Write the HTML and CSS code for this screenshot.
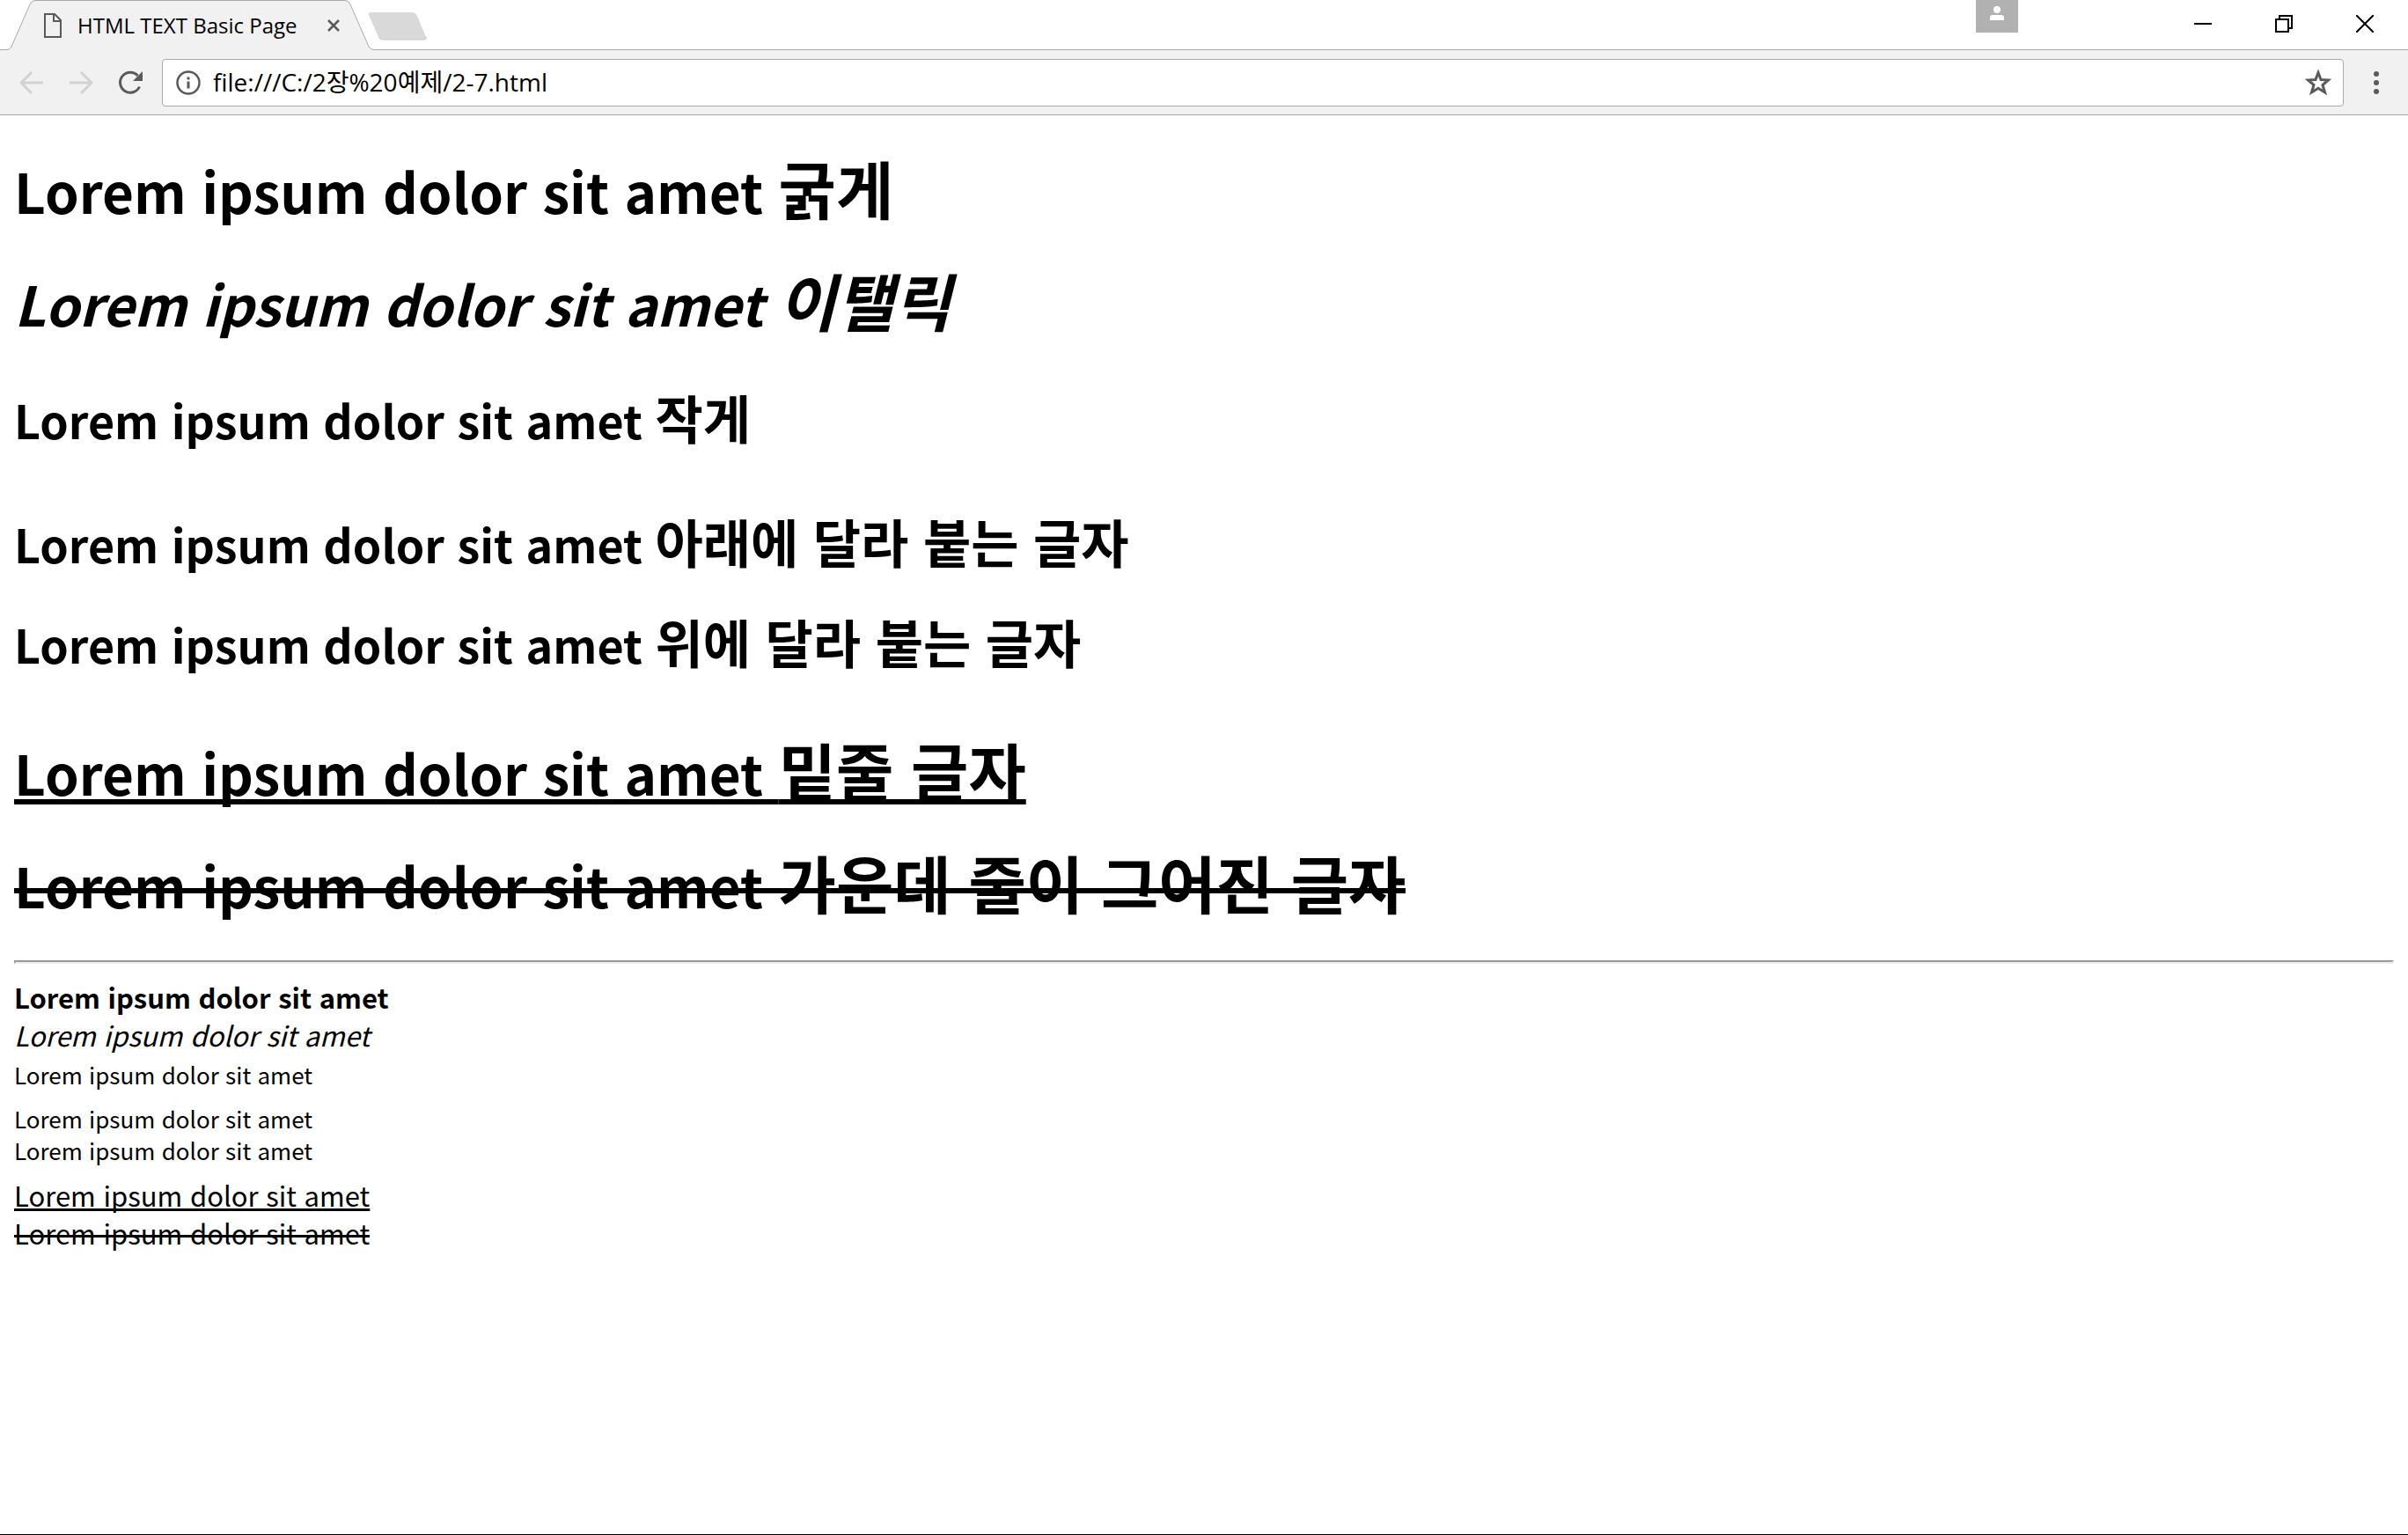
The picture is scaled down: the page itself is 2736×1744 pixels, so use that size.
FILE: index.html
```html
<!DOCTYPE html>
<html lang="ko">
<head>
<meta charset="utf-8">
<title>HTML TEXT Basic Page</title>
<link rel="stylesheet" href="styles.css">
</head>
<body>
<header>
  <div class="tabstrip">
    <div class="tab">
      <svg class="tab-shape" width="426" height="58" viewBox="0 0 426 58" aria-hidden="true"><path d="M0 56.500H8Q11 56.500 13 53L34 5Q36 .5 40 .5H392Q396 .5 398 5L419 53Q421 56.500 425 56.500V58H0Z" fill="#f1f1f1"/><path d="M0 56.500H8Q11 56.500 13 53L34 5Q36 .5 40 .5H392Q396 .5 398 5L419 53Q421 56.500 425 56.500" fill="none" stroke="#a9a9a9"/></svg>
      <svg class="page-icon" width="20" height="28" viewBox="0 0 20 28" aria-hidden="true"><path d="M1 1H12L19 8V27H1ZM11 1V9H19" fill="none" stroke="#5a5a5a" stroke-width="2"/></svg>
      <span class="tab-title">HTML TEXT Basic Page</span>
      <button class="tab-close" aria-label="Close tab"><svg width="14" height="14" viewBox="0 0 14 14"><path d="M1 1L13 13M13 1L1 13" stroke="#5a5a5a" stroke-width="2.500"/></svg></button>
    </div>
    <button class="new-tab" aria-label="New tab"><svg width="68" height="34" viewBox="0 0 68 34"><path d="M3 1H50Q54 1 56 5L66 29Q67 32 63 32H17Q14 32 12 29L1 4Q0 1 3 1Z" fill="#d9d9d9"/><path d="M66 29Q67 32 63 32H17Q14 32 12 29" fill="none" stroke="#c8c8c8"/></svg></button>
    <div class="window-controls">
      <button class="user" aria-label="Profile"><svg width="16" height="16" viewBox="0 0 16 16" fill="#fff"><circle cx="8" cy="4" r="4"/><path d="M0 16V13Q0 10 3 10H13Q16 10 16 13V16Z"/></svg></button>
      <button aria-label="Minimize"><svg width="20" height="20" viewBox="0 0 20 20"><path d="M0 10H20" stroke="#000" stroke-width="2"/></svg></button>
      <button aria-label="Restore"><svg width="20" height="20" viewBox="0 0 20 20" fill="none" stroke="#000" stroke-width="2"><path d="M1 5H15V19H1ZM5 5V1H19V15H15"/></svg></button>
      <button aria-label="Close"><svg width="20" height="20" viewBox="0 0 20 20"><path d="M0 0L20 20M20 0L0 20" stroke="#000" stroke-width="2"/></svg></button>
    </div>
  </div>
  <div class="toolbar">
    <button class="nav" aria-label="Back" disabled><svg width="28" height="28" viewBox="0 0 28 28" fill="none" stroke="#d2d2d2" stroke-width="3"><path d="M27 14H3M14 2L2 14L14 26"/></svg></button>
    <button class="nav" aria-label="Forward" disabled><svg width="28" height="28" viewBox="0 0 28 28" fill="none" stroke="#d2d2d2" stroke-width="3"><path d="M1 14H25M14 2L26 14L14 26"/></svg></button>
    <button class="nav" aria-label="Reload"><svg width="28" height="28" viewBox="0 0 28 28"><path d="M24.500 18.500A11.500 11.500 0 1 1 22.500 6" fill="none" stroke="#5a5a5a" stroke-width="3"/><path d="M28 1V12H17Z" fill="#5a5a5a"/></svg></button>
    <div class="address">
      <svg width="28" height="28" viewBox="0 0 28 28" aria-hidden="true"><circle cx="14" cy="14" r="12.500" fill="none" stroke="#5a5a5a" stroke-width="2.500"/><path d="M12.500 7.500h3v3h-3zM12.500 12.500h3v8h-3z" fill="#5a5a5a"/></svg>
      <input type="text" aria-label="Address" value="file:///C:/2장%20예제/2-7.html">
      <button aria-label="Bookmark"><svg width="30" height="30" viewBox="0 0 30 30"><path d="M15 3.500L18 11.500L26.500 12L20 17.500L22.500 26L15 21.300L7.500 26L10 17.500L3.500 12L12 11.500Z" fill="none" stroke="#5a5a5a" stroke-width="3"/></svg></button>
    </div>
    <button class="menu" aria-label="Menu"><svg width="6" height="26" viewBox="0 0 6 26" fill="#5a5a5a"><circle cx="3" cy="3" r="3"/><circle cx="3" cy="13" r="3"/><circle cx="3" cy="23" r="3"/></svg></button>
  </div>
</header>
<main>
  <h1><b>Lorem ipsum dolor sit amet <span class="ko">굵게</span></b></h1>
  <h1><i>Lorem ipsum dolor sit amet <span class="ko">이탤릭</span></i></h1>
  <h1><small>Lorem ipsum dolor sit amet <span class="ko">작게</span></small></h1>
  <h1><sub>Lorem ipsum dolor sit amet <span class="ko">아래에 달라 붙는 글자</span></sub></h1>
  <h1><sup>Lorem ipsum dolor sit amet <span class="ko">위에 달라 붙는 글자</span></sup></h1>
  <h1><ins>Lorem ipsum dolor sit amet <span class="ko">밑줄 글자</span></ins></h1>
  <h1><del>Lorem ipsum dolor sit amet <span class="ko">가운데 줄이 그어진 글자</span></del></h1>
  <hr>
  <p>
    <b>Lorem ipsum dolor sit amet</b><br>
    <i>Lorem ipsum dolor sit amet</i><br>
    <small>Lorem ipsum dolor sit amet</small><br>
    <sub>Lorem ipsum dolor sit amet</sub><br>
    <sup>Lorem ipsum dolor sit amet</sup><br>
    <ins>Lorem ipsum dolor sit amet</ins><br>
    <del>Lorem ipsum dolor sit amet</del>
  </p>
</main>
</body>
</html>
```
FILE: styles.css
```css
* {
  box-sizing: border-box;
}

body {
  margin: 0;
  min-height: 100vh;
  background: #fff;
  border-bottom: 1px solid #000;
  color: #000;
  font-family: "Noto Sans CJK KR", sans-serif;
  font-size: 31px;
  line-height: 43px;
}

button {
  display: flex;
  align-items: center;
  justify-content: center;
  margin: 0;
  padding: 0;
  border: 0;
  background: none;
}

svg {
  display: block;
  flex: none;
}

/* Browser frame */
header {
  font-family: "Open Sans", "Noto Sans CJK KR", sans-serif;
}

.tabstrip {
  display: flex;
  height: 57px;
  border-bottom: 1px solid #a9a9a9;
}

.tab {
  position: relative;
  display: flex;
  align-items: center;
  width: 418px;
  height: 58px;
  padding: 0 32px 0 50px;
}

.tab-shape {
  position: absolute;
  left: 0;
  top: 0;
}

.page-icon,
.tab-title,
.tab-close {
  position: relative;
}

.tab-title {
  flex: 1;
  margin-left: 18px;
  font-size: 24px;
  line-height: 32px;
}

.new-tab {
  height: 34px;
  margin-top: 13px;
}

.window-controls {
  display: flex;
  margin-left: auto;
  padding-right: 3px;
}

.window-controls button {
  width: 92px;
  height: 54px;
}

.window-controls .user {
  width: 48px;
  height: 37px;
  margin-right: 164px;
  padding-bottom: 7px;
  background: #b1b1b1;
}

.toolbar {
  display: flex;
  align-items: center;
  height: 74px;
  padding-left: 22px;
  background: #f1f1f1;
  border-bottom: 1px solid #a9a9a9;
}

.nav {
  margin-right: 28px;
}

.nav + .nav + .nav {
  margin-right: 22px;
}

.address {
  display: flex;
  flex: 1;
  align-items: center;
  height: 54px;
  padding: 0 13px 0 15px;
  background: #fff;
  border: 1px solid #a9a9a9;
  border-radius: 4px;
}

.address input {
  flex: 1;
  height: 44px;
  margin: 0;
  padding: 0 0 4px 14px;
  border: 0;
  outline: 0;
  background: none;
  color: #000;
  font-family: inherit;
  font-size: 28px;
}

.menu {
  width: 73px;
  height: 54px;
}

/* Page content */
main {
  display: flow-root;
  padding: 0 16px 16px;
}

h1 {
  margin: 43px 0;
  font-size: 62px;
  font-weight: 700;
  line-height: 85px;
}

b {
  font-weight: 700;
}

small,
sub,
sup {
  font-size: 26px;
  line-height: 36px;
}

sub {
  vertical-align: -7px;
}

sup {
  vertical-align: 10px;
}

h1 small,
h1 sub,
h1 sup {
  font-size: 52px;
  line-height: 71px;
}

h1 sub {
  vertical-align: -13px;
}

h1 sup {
  vertical-align: 22px;
}

/* Hangul is set a little larger than the Latin text beside it */
.ko {
  font-size: 71px;
  line-height: 1;
}

small .ko,
sub .ko,
sup .ko {
  font-size: 59px;
}

ins {
  text-decoration-skip-ink: none;
  text-decoration-thickness: 3px;
  text-underline-offset: 2px;
}

h1 ins {
  text-decoration-thickness: 6px;
  text-underline-offset: 4px;
}

/* One straight strike line across both text sizes */
del {
  background: linear-gradient(#000, #000) 0 25px / 100% 3px no-repeat;
  text-decoration: none;
}

h1 del {
  background-position: 0 49px;
  background-size: 100% 6px;
}

hr {
  margin: 0 0 16px;
  border: 2px inset #eee;
}

p {
  margin: 0;
}
```
